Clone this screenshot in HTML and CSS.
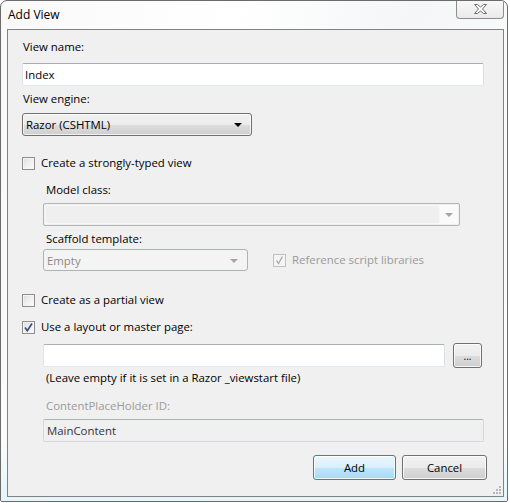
FILE: index.html
```html
<!DOCTYPE html>
<html>
<head>
<meta charset="utf-8">
<link rel="stylesheet" href="styles.css">
</head>
<body>
<div class="window">
  <div class="titlebar">
    <span class="title">Add View</span>
    <div class="close">
      <svg width="13" height="10" viewBox="0 0 13 10"><path d="M0.5 0.5 H3.5 L6.5 3 L9.5 0.5 H12.5 L8.5 5 L12.5 9.5 H9.5 L6.5 7 L3.5 9.5 H0.5 L4.5 5 Z" fill="#fff" stroke="#6c6c6c" stroke-width="1" stroke-linejoin="round"/></svg>
    </div>
  </div>
  <div class="panel">
    <div class="label l-first">View name:</div>
    <div class="textbox tb-name">Index</div>
    <div class="label l-engine">View engine:</div>
    <div class="combo combo-engine"><span>Razor (CSHTML)</span><span class="arrow"></span></div>

    <div class="check-row cr-typed"><span class="cb"></span><span>Create a strongly-typed view</span></div>
    <div class="indent">
      <div class="label l-model">Model class:</div>
      <div class="dcombo combo-model"><span class="dfield"></span><span class="darrow"><span class="arrow gray"></span></span></div>
      <div class="label l-scaffold">Scaffold template:</div>
      <div class="scaffold-row">
        <div class="dcombo combo-scaffold"><span class="dtext">Empty</span><span class="arrow gray"></span></div>
        <div class="check-row disabled"><span class="cb cb-dis"><svg width="11" height="11" viewBox="0 0 11 11"><path d="M2.5 5.5 L4.5 8.5 L8.5 1.5" fill="none" stroke="#a8a8a8" stroke-width="1.3"/></svg></span><span>Reference script libraries</span></div>
      </div>
    </div>

    <div class="check-row cr-partial"><span class="cb"></span><span>Create as a partial view</span></div>
    <div class="check-row cr-layout"><span class="cb"><svg width="11" height="11" viewBox="0 0 11 11"><path d="M2 5.5 L4.3 8.8 L9 1.5" fill="none" stroke="#3d4f7f" stroke-width="1.7"/></svg></span><span>Use a layout or master page:</span></div>
    <div class="indent">
      <div class="layout-row">
        <div class="textbox tb-layout"></div>
        <div class="btn btn-browse">...</div>
      </div>
      <div class="label l-hint">(Leave empty if it is set in a Razor _viewstart file)</div>
      <div class="label l-cph">ContentPlaceHolder ID:</div>
      <div class="textbox tb-cph">MainContent</div>
    </div>

    <div class="buttons">
      <div class="btn btn-add">Add</div>
      <div class="btn btn-cancel">Cancel</div>
    </div>
    <div class="grip">
      <svg width="10" height="10" viewBox="0 0 10 10"><g fill="#b8b8b8"><rect x="7" y="1" width="2" height="2"/><rect x="4" y="4" width="2" height="2"/><rect x="7" y="4" width="2" height="2"/><rect x="1" y="7" width="2" height="2"/><rect x="4" y="7" width="2" height="2"/><rect x="7" y="7" width="2" height="2"/></g></svg>
    </div>
  </div>
</div>
</body>
</html>
```
FILE: styles.css
```css
html, body {
  margin: 0;
  padding: 0;
  background: #ffffff;
}
body {
  font-family: "Open Sans", "Noto Sans", sans-serif;
  font-size: 11.4px;
  color: #000;
}
.window {
  width: 508px;
  height: 502px;
  border: 1px solid #6b6b6b;
  border-radius: 7px 7px 2px 2px;
  background: linear-gradient(100deg, #f9f9f9 0%, #ffffff 40%, #f4f6f7 70%, #fdfdfd 100%);
  position: relative;
  box-sizing: border-box;
  overflow: hidden;
}
.window::after {
  content: "";
  position: absolute;
  left: 0; right: 0; bottom: 0;
  height: 60px;
  background: linear-gradient(180deg, rgba(225,245,252,0) 0%, rgba(225,245,252,0.9) 100%);
  pointer-events: none;
}
.titlebar {
  height: 28px;
  display: flex;
  align-items: flex-start;
  justify-content: space-between;
}
.title {
  margin: 6px 0 0 7px;
  font-size: 12px;
  line-height: 16px;
}
.close {
  width: 46px;
  height: 18px;
  margin-right: 3px;
  margin-top: -1px;
  border: 1px solid #8c8c8c;
  border-top: none;
  border-radius: 0 0 4px 4px;
  background: linear-gradient(180deg, #f9f9f9, #eaeaea);
  display: flex;
  align-items: center;
  justify-content: center;
}
.panel {
  position: relative;
  z-index: 1;
  margin: 0 3px 0 6px;
  height: 468px;
  box-sizing: border-box;
  border: 1px solid #828282;
  background: #f0f0f0;
  padding: 9px 16px 0 14px;
  display: flex;
  flex-direction: column;
}
.label {
  line-height: 16px;
  height: 16px;
  white-space: nowrap;
  padding-left: 1px;
}
.indent .label { padding-left: 3px; }
.l-engine { margin-top: 5px; }
.l-model { margin-top: 11px; }
.l-scaffold { margin-top: 5px; }
.l-hint { margin-top: 2px; }
.l-cph { margin-top: 12px; color: #9a9a9a; }

.textbox {
  box-sizing: border-box;
  height: 23px;
  background: #fff;
  border: 1px solid;
  border-color: #abadb3 #dbdfe6 #e3e9ef #e2e3ea;
  border-radius: 2px;
  line-height: 21px;
  padding-left: 2px;
}
.tb-name { margin-top: 8px; width: 462px; }
.tb-layout { width: 402px; }
.tb-cph {
  margin-top: 5px;
  width: 441px;
  background: #f0f0f0;
  border-color: #adb2b5 #d5d8dc #d5d8dc #d5d8dc;
  color: #333;
  padding-left: 3px;
}

.combo {
  margin-top: 6px;
  box-sizing: border-box;
  width: 230px;
  height: 23px;
  border: 1px solid #707070;
  border-radius: 3px;
  background: linear-gradient(180deg, #f2f2f2 0%, #ebebeb 50%, #dddddd 51%, #cfcfcf 100%);
  box-shadow: inset 0 0 0 1px rgba(255,255,255,0.7);
  display: flex;
  align-items: center;
  justify-content: space-between;
  padding: 0 9px 0 3px;
}
.arrow {
  width: 0; height: 0;
  border-left: 4px solid transparent;
  border-right: 4px solid transparent;
  border-top: 4px solid #000;
  margin-top: 1px;
}
.arrow.gray { border-top-color: #a5a5a5; }

.check-row {
  display: flex;
  align-items: center;
  gap: 6px;
  height: 16px;
  line-height: 16px;
  white-space: nowrap;
}
.cb {
  width: 13px;
  height: 13px;
  box-sizing: border-box;
  border: 1px solid #8e8f8f;
  background: linear-gradient(135deg, #dcdcdc 0%, #f0f0f0 50%, #fbfbfb 100%);
  box-shadow: inset 0 0 0 1px #f4f4f4;
  display: flex;
  align-items: center;
  justify-content: center;
  flex: none;
}
.cb svg { display: block; }
.cb-dis { border-color: #c0c0c0; background: #f4f4f4; box-shadow: none; }
.check-row.disabled { color: #9a9a9a; }
.cr-typed { margin-top: 19px; }
.cr-partial { margin-top: 21px; }
.cr-layout { margin-top: 11px; }

.indent {
  padding-left: 21px;
  display: flex;
  flex-direction: column;
}
.dcombo {
  box-sizing: border-box;
  height: 23px;
  border: 1px solid #adb2b5;
  border-radius: 2px;
  display: flex;
  align-items: center;
}
.combo-model {
  margin-top: 5px;
  width: 417px;
  background: #f0f0f0;
  border-color: #b4b4b4;
  padding: 1px;
}
.dfield { flex: 1; height: 100%; background: #efefef; box-shadow: inset 0 0 0 1px #f7f7f7; }
.darrow { width: 18px; height: 100%; background: #fafafa; display: flex; align-items: center; justify-content: center; }
.scaffold-row {
  margin-top: 2px;
  display: flex;
  align-items: center;
  gap: 25px;
}
.combo-scaffold {
  width: 205px;
  height: 22px;
  background: #f4f4f4;
  border-radius: 3px;
  justify-content: space-between;
  padding: 0 9px 0 3px;
  color: #8a8a8a;
}
.layout-row {
  margin-top: 8px;
  display: flex;
  align-items: center;
  gap: 8px;
}
.btn {
  box-sizing: border-box;
  border: 1px solid #707070;
  border-radius: 3px;
  background: linear-gradient(180deg, #f2f2f2 0%, #ebebeb 50%, #dddddd 51%, #cfcfcf 100%);
  display: flex;
  align-items: center;
  justify-content: center;
  box-shadow: inset 0 0 0 1px rgba(255,255,255,0.8);
}
.btn-browse {
  width: 29px;
  height: 25px;
  font-size: 10px;
  line-height: 10px;
}
.buttons {
  margin-top: 13px;
  display: flex;
  justify-content: flex-end;
  gap: 6px;
}
.btn-add {
  width: 83px;
  height: 25px;
  border-color: #3c7fb1;
  background: linear-gradient(180deg, #eaf6fd 0%, #d9f0fc 50%, #bee6fd 51%, #a7d9f5 100%);
}
.btn-cancel {
  width: 85px;
  height: 25px;
}
.grip {
  position: absolute;
  right: 1px;
  bottom: 1px;
  line-height: 0;
}
```
